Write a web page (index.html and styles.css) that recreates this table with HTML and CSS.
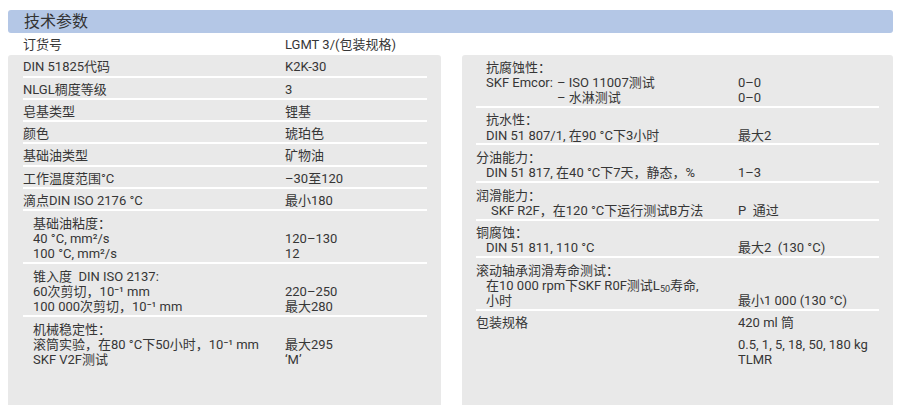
FILE: index.html
```html
<!DOCTYPE html>
<html lang="zh-CN">
<head>
<meta charset="utf-8">
<title>技术参数</title>
<link rel="stylesheet" href="styles.css">
</head>
<body>
<div class="page">
  <div class="header">技术参数</div>
  <div class="cols">
    <div class="col">
      <div class="row top">
        <div class="lbl">订货号</div>
        <div class="val">LGMT 3/(包装规格)</div>
      </div>
      <div class="box">
        <div class="row"><div class="lbl">DIN 51825代码</div><div class="val">K2K-30</div></div>
        <div class="row"><div class="lbl">NLGL稠度等级</div><div class="val">3</div></div>
        <div class="row"><div class="lbl">皂基类型</div><div class="val">锂基</div></div>
        <div class="row"><div class="lbl">颜色</div><div class="val">琥珀色</div></div>
        <div class="row"><div class="lbl">基础油类型</div><div class="val">矿物油</div></div>
        <div class="row"><div class="lbl">工作温度范围°C</div><div class="val">–30至120</div></div>
        <div class="row"><div class="lbl">滴点DIN ISO 2176 °C</div><div class="val">最小180</div></div>
        <div class="row multi">
          <div class="lbl ind">
            <div>基础油粘度：</div>
            <div>40 °C, mm²/s</div>
            <div>100 °C, mm²/s</div>
          </div>
          <div class="val">
            <div>&nbsp;</div>
            <div>120–130</div>
            <div>12</div>
          </div>
        </div>
        <div class="row multi">
          <div class="lbl ind">
            <div>锥入度&nbsp; DIN ISO 2137:</div>
            <div>60次剪切，10⁻¹ mm</div>
            <div>100 000次剪切，10⁻¹ mm</div>
          </div>
          <div class="val">
            <div>&nbsp;</div>
            <div>220–250</div>
            <div>最大280</div>
          </div>
        </div>
        <div class="row multi last">
          <div class="lbl ind">
            <div>机械稳定性：</div>
            <div>滚筒实验，在80 °C下50小时，10⁻¹ mm</div>
            <div>SKF V2F测试</div>
          </div>
          <div class="val">
            <div>&nbsp;</div>
            <div>最大295</div>
            <div>‘M’</div>
          </div>
        </div>
      </div>
    </div>

    <div class="col right">
      <div class="box">
        <div class="row multi">
          <div class="lbl ind">
            <div>抗腐蚀性：</div>
            <div class="emcor"><span class="em-k">SKF Emcor:</span><span class="em-v"><span class="em-line">– ISO 11007测试</span><span class="em-line">– 水淋测试</span></span></div>
          </div>
          <div class="val">
            <div>&nbsp;</div>
            <div>0–0</div>
            <div>0–0</div>
          </div>
        </div>
        <div class="row multi">
          <div class="lbl ind">
            <div>抗水性：</div>
            <div>DIN 51 807/1, 在90 °C下3小时</div>
          </div>
          <div class="val">
            <div>&nbsp;</div>
            <div>最大2</div>
          </div>
        </div>
        <div class="row multi">
          <div class="lbl">
            <div>分油能力：</div>
            <div class="sub1">DIN 51 817, 在40 °C下7天，静态，%</div>
          </div>
          <div class="val">
            <div>&nbsp;</div>
            <div>1–3</div>
          </div>
        </div>
        <div class="row multi">
          <div class="lbl">
            <div>润滑能力：</div>
            <div class="sub2">SKF R2F，在120 °C下运行测试B方法</div>
          </div>
          <div class="val">
            <div>&nbsp;</div>
            <div>P&nbsp; 通过</div>
          </div>
        </div>
        <div class="row multi">
          <div class="lbl">
            <div>铜腐蚀：</div>
            <div class="sub1">DIN 51 811, 110 °C</div>
          </div>
          <div class="val">
            <div>&nbsp;</div>
            <div>最大2&nbsp; (130 °C)</div>
          </div>
        </div>
        <div class="row multi">
          <div class="lbl">
            <div>滚动轴承润滑寿命测试：</div>
            <div class="sub1">在10 000 rpm下SKF R0F测试L<sub class="sb">50</sub>寿命,</div>
            <div class="sub1">小时</div>
          </div>
          <div class="val">
            <div>&nbsp;</div>
            <div>&nbsp;</div>
            <div>最小1 000 (130 °C)</div>
          </div>
        </div>
        <div class="row last">
          <div class="lbl">包装规格</div>
          <div class="val">
            <div>420 ml 筒</div>
            <div class="gap">0.5, 1, 5, 18, 50, 180 kg</div>
            <div>TLMR</div>
          </div>
        </div>
      </div>
    </div>
  </div>
</div>
</body>
</html>
```

FILE: styles.css
```css
html, body {
  margin: 0;
  padding: 0;
  background: #ffffff;
  overflow: hidden;
}

body {
  font-family: Roboto, "Noto Sans CJK SC", sans-serif;
  font-size: 13px;
  color: #363636;
}

.page {
  width: 885px;
  margin: 10px 0 0 8px;
}

.header {
  height: 23px;
  box-sizing: border-box;
  padding: 1px 16px 0;
  line-height: 22px;
  font-size: 16px;
  background: #b4c7e6;
  border-radius: 3px;
  color: #333333;
}

.cols {
  display: grid;
  grid-template-columns: 433px 431px;
  column-gap: 21px;
}

.col.right {
  padding-top: 22px;
}

.box {
  background: #e9e9e9;
  border-radius: 3px 3px 0 0;
  padding: 0 14px 0 15px;
  height: 350px;
  box-sizing: border-box;
}

.col.right .box {
  padding: 0 14px 0 14px;
}

.row {
  display: grid;
  grid-template-columns: 262px 1fr;
  padding: 4px 0 1px;
  line-height: 15.3px;
  border-bottom: 2px solid #ffffff;
  white-space: nowrap;
}

.row.top {
  border-bottom: none;
  padding: 4px 15px 3px;
}

.row.last {
  border-bottom: none;
}

.row.multi {
  padding-top: 4.5px;
  padding-bottom: 0.5px;
}

.lbl.ind {
  padding-left: 10px;
}

.sub1 {
  padding-left: 10px;
}

.sub2 {
  padding-left: 15px;
}

.emcor {
  display: flex;
}

.em-k {
  width: 71px;
  flex: none;
}

.em-v {
  display: flex;
  flex-direction: column;
}

.gap {
  margin-top: 6.7px;
}

.sb {
  font-size: 9px;
  line-height: 0;
  vertical-align: -2px;
}
```
